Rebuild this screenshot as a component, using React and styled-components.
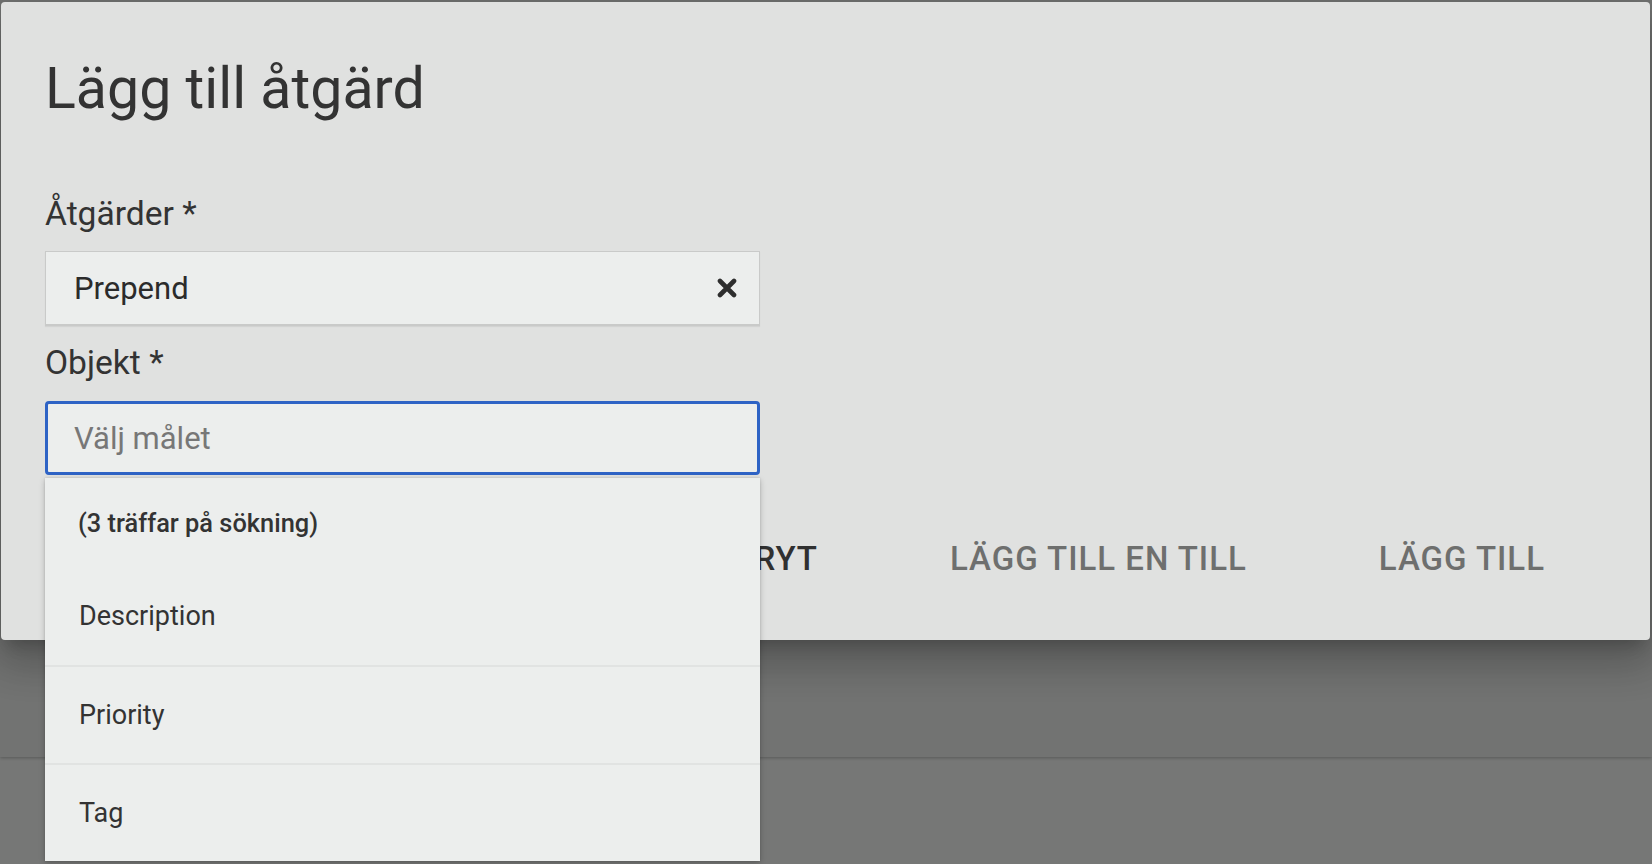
import React from "react";
import styled, { createGlobalStyle } from "styled-components";

const GlobalStyle = createGlobalStyle`
  html, body {
    margin: 0;
    padding: 0;
  }
  body {
    font-family: Roboto, "Liberation Sans", sans-serif;
    background: #767776;
    overflow: hidden;
  }
`;

const Page = styled.div`
  position: relative;
  height: 864px;
  background: #767776;
`;

const BackSheet = styled.div`
  height: 757px;
  background: #727372;
  box-shadow: 0 1px 3px rgba(0, 0, 0, 0.25);
`;

const Dialog = styled.div`
  position: absolute;
  top: 2px;
  left: 1px;
  right: 2px;
  height: 638px;
  box-sizing: border-box;
  padding: 52px 0 0 44px;
  display: flex;
  flex-direction: column;
  background: #e0e1e0;
  border-radius: 4px;
  box-shadow: 0 11px 15px -7px rgba(0, 0, 0, 0.2),
    0 24px 38px 3px rgba(0, 0, 0, 0.14), 0 9px 46px 8px rgba(0, 0, 0, 0.12);
`;

const Title = styled.h1`
  margin: 0;
  font-size: 57.3px;
  line-height: 70px;
  font-weight: 400;
  color: #333;
`;

const Label = styled.label`
  display: block;
  margin-top: ${(p) => p.$gap}px;
  font-size: 33.6px;
  line-height: 40px;
  color: #333;
`;

const Field = styled.div`
  position: relative;
  width: 715px;
  margin-top: ${(p) => p.$gap}px;
`;

const SelectBox = styled.div`
  height: 75px;
  box-sizing: border-box;
  display: flex;
  align-items: center;
  justify-content: space-between;
  padding: 0 22px 0 28px;
  background: #eceeed;
  border: 1px solid #c9cac9;
  border-bottom-width: 2px;
  box-shadow: 0 1px 1px rgba(0, 0, 0, 0.06);
  font-size: 31px;
  color: #2b2b2b;
`;

const ClearButton = styled.button`
  display: flex;
  padding: 0;
  border: none;
  background: none;
  cursor: pointer;
`;

const SearchInput = styled.input`
  display: block;
  width: 100%;
  height: 74px;
  box-sizing: border-box;
  padding: 0 0 0 26px;
  background: #eceeed;
  border: 3px solid #2e63c5;
  border-radius: 4px;
  outline: none;
  font-family: Roboto, "Liberation Sans", sans-serif;
  font-size: 31px;
  color: #2b2b2b;

  &::placeholder {
    color: #777;
  }
`;

const Menu = styled.div`
  position: absolute;
  top: calc(100% + 3px);
  left: 0;
  width: 100%;
  max-height: 383px;
  overflow: hidden;
  background: #eceeed;
  box-shadow: 0 2px 6px rgba(0, 0, 0, 0.22), 0 0 2px rgba(0, 0, 0, 0.12);
  z-index: 2;
`;

const MenuHint = styled.div`
  height: 89px;
  display: flex;
  align-items: center;
  padding-left: 33px;
  font-size: 25.4px;
  font-weight: 500;
  color: #333;
`;

const Option = styled.div`
  height: 98px;
  box-sizing: border-box;
  display: flex;
  align-items: center;
  padding-left: 34px;
  font-size: 27px;
  color: #333;

  & + & {
    border-top: 2px solid #e1e3e2;
  }
`;

const Actions = styled.div`
  display: flex;
  justify-content: flex-end;
  gap: 32px;
  margin-top: 56px;
  padding-right: 55px;
`;

const ActionButton = styled.button`
  padding: 0 50px;
  border: none;
  background: none;
  font-family: Roboto, "Liberation Sans", sans-serif;
  font-size: 33px;
  font-weight: 500;
  line-height: 56px;
  letter-spacing: 0.03em;
  text-transform: uppercase;
  color: ${(p) => (p.disabled ? "#6e6f6e" : "#303030")};
`;

const CloseIcon = () => (
  <svg width="20" height="20" viewBox="0 0 20 20">
    <path
      d="M3 3 L17 17 M17 3 L3 17"
      stroke="#2e2e2e"
      strokeWidth="4.6"
      strokeLinecap="round"
    />
  </svg>
);

const options = ["Description", "Priority", "Tag"];

export default function App() {
  return (
    <Page>
      <GlobalStyle />
      <BackSheet />
      <Dialog>
        <Title>Lägg till åtgärd</Title>
        <Label $gap={70}>Åtgärder *</Label>
        <Field $gap={17}>
          <SelectBox>
            <span>Prepend</span>
            <ClearButton aria-label="Rensa">
              <CloseIcon />
            </ClearButton>
          </SelectBox>
        </Field>
        <Label $gap={17}>Objekt *</Label>
        <Field $gap={18}>
          <SearchInput placeholder="Välj målet" />
          <Menu>
            <MenuHint>(3 träffar på sökning)</MenuHint>
            {options.map((o) => (
              <Option key={o}>{o}</Option>
            ))}
          </Menu>
        </Field>
        <Actions>
          <ActionButton>Avbryt</ActionButton>
          <ActionButton disabled>Lägg till en till</ActionButton>
          <ActionButton disabled>Lägg till</ActionButton>
        </Actions>
      </Dialog>
    </Page>
  );
}
